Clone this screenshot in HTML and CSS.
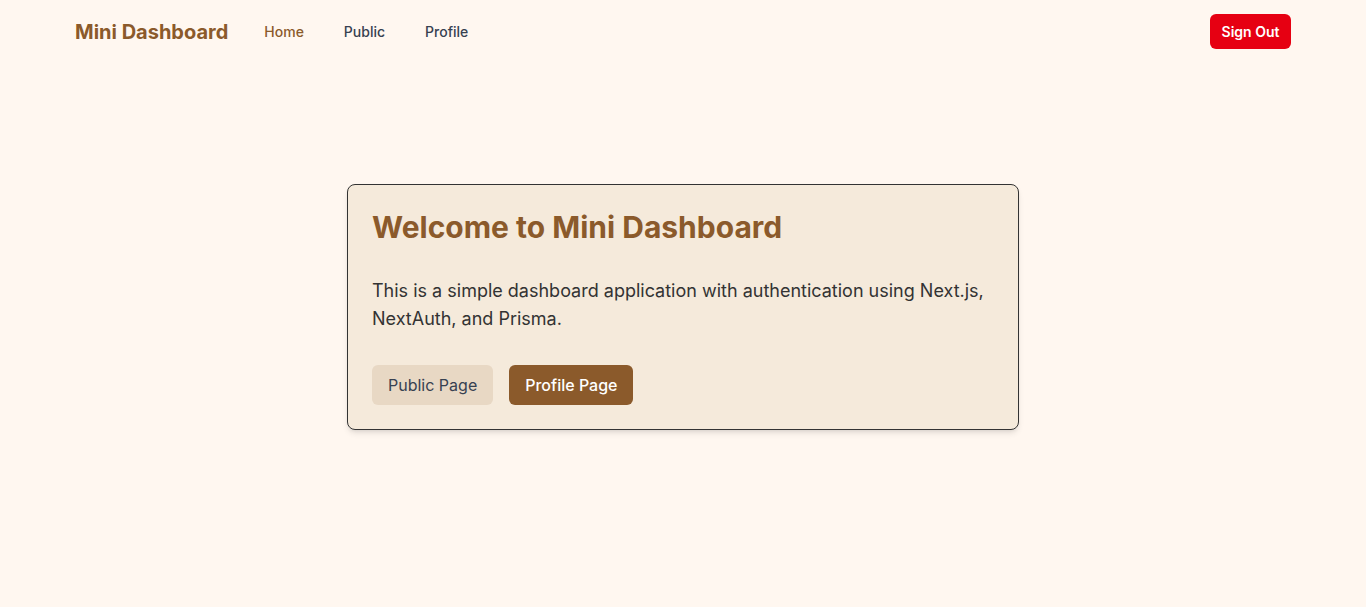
FILE: index.html
```html
<!DOCTYPE html>
<html lang="en">
<head>
<meta charset="utf-8">
<title>Mini Dashboard</title>
<link rel="stylesheet" href="styles.css">
</head>
<body>
<nav class="nav">
  <div class="nav-inner">
    <div class="nav-left">
      <a class="logo" href="#">Mini Dashboard</a>
      <div class="links">
        <a class="link active" href="#">Home</a>
        <a class="link" href="#">Public</a>
        <a class="link" href="#">Profile</a>
      </div>
    </div>
    <button class="signout">Sign Out</button>
  </div>
</nav>
<main class="main">
  <section class="card">
    <h1 class="title">Welcome to Mini Dashboard</h1>
    <p class="text">This is a simple dashboard application with authentication using Next.js, NextAuth, and Prisma.</p>
    <div class="actions">
      <a class="btn btn-secondary" href="#">Public Page</a>
      <a class="btn btn-primary" href="#">Profile Page</a>
    </div>
  </section>
</main>
</body>
</html>
```
FILE: styles.css
```css
* { box-sizing: border-box; }
html, body { margin: 0; padding: 0; }
body {
  background: #fff7f0;
  font-family: Inter, "Noto Sans", sans-serif;
  color: #333333;
  min-height: 607px;
}
a { text-decoration: none; }
.nav { height: 64px; }
.nav-inner {
  max-width: 1280px;
  margin: 0 auto;
  padding: 0 32px;
  height: 64px;
  display: flex;
  align-items: center;
  justify-content: space-between;
}
.nav-left { display: flex; align-items: center; }
.logo {
  font-size: 20px;
  line-height: 28px;
  font-weight: 700;
  color: #8b5a2b;
  margin-right: 36px;
}
.links { display: flex; gap: 40px; }
.link {
  font-size: 14px;
  line-height: 20px;
  font-weight: 500;
  color: #374151;
}
.link.active { color: #8b5a2b; }
.signout {
  background: #e60012;
  color: #ffffff;
  border: none;
  border-radius: 6px;
  font-family: Inter, "Noto Sans", sans-serif;
  font-size: 14px;
  line-height: 20px;
  font-weight: 600;
  padding: 0 11.5px;
  height: 35px;
  white-space: nowrap;
  margin-bottom: 1px;
}
.main {
  display: flex;
  justify-content: center;
  padding-top: 120px;
}
.card {
  width: 672px;
  background: #f5eadb;
  border: 1px solid #333333;
  border-radius: 8px;
  padding: 24px;
  box-shadow: 0 4px 6px -1px rgba(0,0,0,0.1), 0 2px 4px -2px rgba(0,0,0,0.1);
}
.title {
  margin: 0 0 32px;
  font-size: 30px;
  line-height: 36px;
  font-weight: 700;
  color: #8b5a2b;
}
.text {
  margin: 0 0 32px;
  font-size: 18px;
  line-height: 28px;
  color: #333333;
}
.actions { display: flex; gap: 16px; }
.btn {
  display: inline-block;
  font-size: 16px;
  line-height: 24px;
  padding: 8px 16px;
  border-radius: 6px;
  font-weight: 400;
}
.btn-secondary { background: #e8d8c4; color: #374151; }
.btn-primary { background: #8b5a2b; color: #ffffff; font-weight: 500; }
```
